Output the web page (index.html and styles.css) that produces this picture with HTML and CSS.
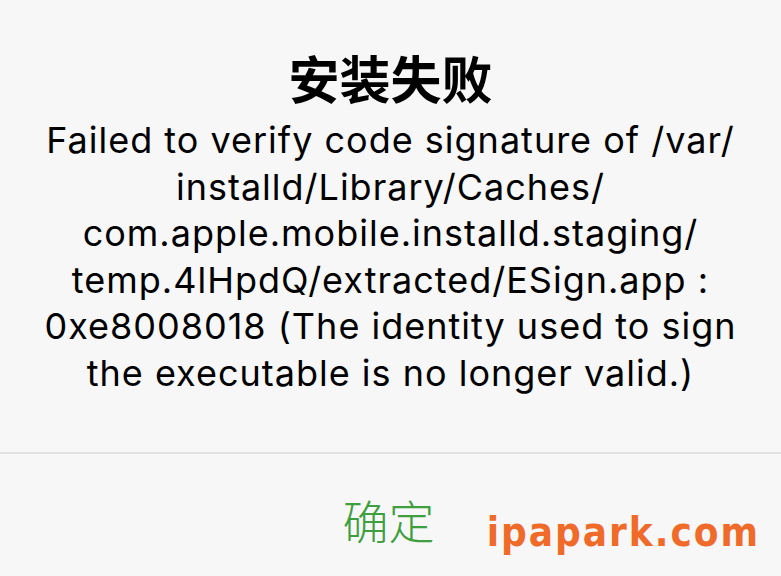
FILE: index.html
```html
<!DOCTYPE html>
<html lang="zh-CN">
<head>
    <meta charset="UTF-8">
    <meta name="viewport" content="width=device-width, initial-scale=1.0">
    <title>安装失败</title>
    <link rel="stylesheet" href="styles.css">
</head>
<body>
    <div class="alert">
        <div class="alert-body">
            <h1 class="alert-title">安装失败</h1>
            <p class="alert-message">Failed to verify code signature of /var/<br>installd/Library/Caches/<br>com.apple.mobile.installd.staging/<br>temp.4lHpdQ/extracted/ESign.app :<br>0xe8008018 (The identity used to sign<br>the executable is no longer valid.)</p>
        </div>
        <div class="alert-actions">
            <button class="alert-button">确定</button>
            <span class="watermark">ipapark.com</span>
        </div>
    </div>
</body>
</html>
```
FILE: styles.css
```css
body {
    margin: 0;
    background: #f7f7f7;
    font-family: Inter, "Noto Sans CJK SC", sans-serif;
    color: #000;
}

.alert {
    width: 781px;
    height: 576px;
    display: flex;
    flex-direction: column;
}

.alert-body {
    height: 454px;
    padding-top: 47px;
    box-sizing: border-box;
    border-bottom: 2px solid #e2e2e2;
    text-align: center;
}

.alert-title {
    margin: 0 0 10px;
    font-family: "Noto Sans CJK SC", sans-serif;
    font-size: 51px;
    line-height: 60px;
    font-weight: 700;
}

.alert-message {
    margin: 0;
    font-size: 36px;
    line-height: 46.5px;
    letter-spacing: 1px;
}

.alert-actions {
    flex: 1;
    position: relative;
    display: flex;
    justify-content: center;
    align-items: center;
}

.alert-button {
    border: none;
    background: none;
    padding: 0;
    margin: 8px 4px 0 0;
    font-family: "Noto Sans CJK SC", sans-serif;
    font-size: 46px;
    font-weight: 300;
    color: #3f9f3f;
}

/* site watermark over the corner */
.watermark {
    position: absolute;
    right: 21px;
    bottom: 21px;
    font-family: "DejaVu Sans Condensed", "DejaVu Sans", sans-serif;
    font-stretch: condensed;
    font-weight: 700;
    font-size: 40px;
    letter-spacing: 2px;
    color: #f06a2a;
}
```
